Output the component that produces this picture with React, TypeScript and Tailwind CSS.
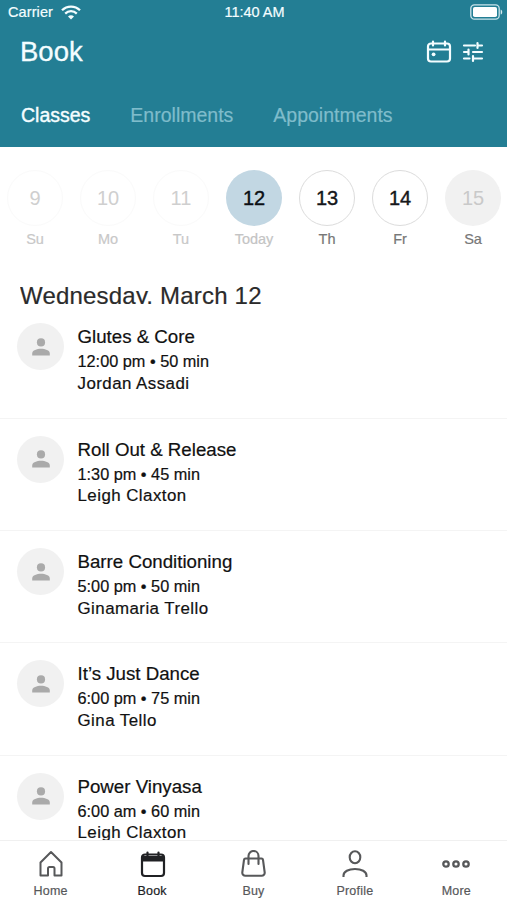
import React, { useState } from "react";

const tabs = ["Classes", "Enrollments", "Appointments"];

const days = [
  { num: 9, label: "Su", status: "past" },
  { num: 10, label: "Mo", status: "past" },
  { num: 11, label: "Tu", status: "past" },
  { num: 12, label: "Today", status: "selected" },
  { num: 13, label: "Th", status: "open" },
  { num: 14, label: "Fr", status: "open" },
  { num: 15, label: "Sa", status: "closed" },
];

const circleStyles: Record<string, string> = {
  past: "border border-[#fafafa] text-[#cfcfcf]",
  selected: "bg-[#c2d7e3] text-[#0b0f14] [-webkit-text-stroke:0.4px]",
  open: "border border-[#dcdcdc] text-[#15171a] [-webkit-text-stroke:0.4px]",
  closed: "bg-[#f1f1f1] text-[#c9c9c9]",
};

const labelStyles: Record<string, string> = {
  past: "text-[#c8c8c8]",
  selected: "text-[#c4c4c4]",
  open: "text-[#777777]",
  closed: "text-[#777777]",
};

const classes = [
  { name: "Glutes & Core", time: "12:00 pm", length: "50 min", teacher: "Jordan Assadi" },
  { name: "Roll Out & Release", time: "1:30 pm", length: "45 min", teacher: "Leigh Claxton" },
  { name: "Barre Conditioning", time: "5:00 pm", length: "50 min", teacher: "Ginamaria Trello" },
  { name: "It’s Just Dance", time: "6:00 pm", length: "75 min", teacher: "Gina Tello" },
  { name: "Power Vinyasa", time: "6:00 am", length: "60 min", teacher: "Leigh Claxton" },
];

const WifiIcon = () => (
  <svg width="20" height="15" viewBox="0 0 20 15" fill="none" stroke="currentColor" strokeWidth="2.3">
    <path d="M1 5.2C6 .3 14 .3 19 5.2" />
    <path d="M4.2 8.6c3.3-3.2 8.3-3.2 11.6 0" />
    <path d="M7 11.4c1.7-1.6 4.3-1.6 6 0L10 14.5z" fill="currentColor" stroke="none" />
  </svg>
);

const BatteryIcon = () => (
  <svg width="33" height="16" viewBox="0 0 33 16" fill="none">
    <rect x="0.8" y="0.8" width="28.4" height="14.4" rx="3.6" stroke="#c9e3ea" strokeWidth="1.3" />
    <rect x="3" y="3" width="24" height="10" rx="1.8" fill="#fff" />
    <path d="M30.7 5.4c2 .8 2 4.4 0 5.2z" fill="#d5eaef" />
  </svg>
);

const CalendarIcon = () => (
  <svg width="26" height="24" viewBox="0 0 26 24" fill="none" stroke="currentColor" strokeWidth="2.2" strokeLinecap="round">
    <rect x="2" y="3.5" width="22" height="18" rx="3" />
    <path d="M2 9.5h22M7 1.5v4M19 1.5v4" />
    <circle cx="7.6" cy="14.3" r="1.9" fill="currentColor" stroke="none" />
  </svg>
);

const FilterIcon = () => (
  <svg width="22" height="22" viewBox="0 0 22 22" fill="none" stroke="currentColor" strokeWidth="2.2" strokeLinecap="round">
    <path d="M2 4.5h11M15.5 2v5M15.5 4.5H20" />
    <path d="M2 11h4.5M6.5 8.5v5M11 11h9" />
    <path d="M2 17.500h5.500M11 15v5M11 17.500h9" />
  </svg>
);

const PersonIcon = () => (
  <svg width="18" height="18" viewBox="0 0 18 18" fill="#aaaaaa">
    <circle cx="9" cy="4.4" r="4.1" />
    <path d="M0.2 17.4v-2C.2 12.2 5 10.7 9 10.7s8.8 1.5 8.8 4.7v2z" />
  </svg>
);

const HomeIcon = () => (
  <svg width="26" height="28" viewBox="0 0 26 28" fill="none" stroke="currentColor" strokeWidth="2" strokeLinejoin="round">
    <path d="M2.5 12.5 13 2l10.5 10.5V25.5H16.5V18.5a1.5 1.5 0 0 0-1.5-1.5H11.5a1.5 1.5 0 0 0-1.5 1.5V25.5H2.5z" />
  </svg>
);

const BookIcon = () => (
  <svg width="28" height="28" viewBox="0 0 28 28" fill="none" stroke="currentColor" strokeWidth="2.2" strokeLinecap="round">
    <rect x="4" y="4.5" width="22" height="21.500" rx="3" />
    <path d="M4 6h22v5.500H4z" fill="currentColor" stroke="none" />
    <path d="M9.500 2.500v3M20.500 2.500v3" />
  </svg>
);

const BuyIcon = () => (
  <svg width="28" height="28" viewBox="0 0 28 28" fill="none" stroke="currentColor" strokeWidth="2.1" strokeLinecap="round" strokeLinejoin="round">
    <path d="M6.500 8.500h16a1.500 1.500 0 0 1 1.500 1.300l1.700 12.700a3 3 0 0 1-3 3.300H6.300a3 3 0 0 1-3-3.300l1.700-12.700a1.500 1.500 0 0 1 1.500-1.300z" />
    <path d="M9.500 14V6a5 5 0 0 1 10 0v8" />
  </svg>
);

const ProfileIcon = () => (
  <svg width="28" height="28" viewBox="0 0 28 28" fill="none" stroke="currentColor" strokeWidth="2.1">
    <ellipse cx="14" cy="7.3" rx="5.3" ry="6" />
    <path d="M2.5 27v-1.5c0-4 5-6.500 11.500-6.500s11.500 2.500 11.500 6.500V27" />
  </svg>
);

const MoreIcon = () => (
  <svg width="28" height="28" viewBox="0 0 28 28" fill="none" stroke="currentColor" strokeWidth="2.3">
    <circle cx="4" cy="14" r="2.7" />
    <circle cx="14" cy="14" r="2.7" />
    <circle cx="24" cy="14" r="2.7" />
  </svg>
);

const navItems = [
  { label: "Home", icon: <HomeIcon /> },
  { label: "Book", icon: <BookIcon /> },
  { label: "Buy", icon: <BuyIcon /> },
  { label: "Profile", icon: <ProfileIcon /> },
  { label: "More", icon: <MoreIcon /> },
];

const App: React.FC = () => {
  const [activeTab, setActiveTab] = useState("Classes");

  return (
    <div className="flex h-[900px] w-[507px] flex-col overflow-hidden bg-white font-['Liberation_Sans',Arial,sans-serif]">
      <header className="h-[147px] shrink-0 bg-[#237e94] text-[#f4fdff]">
        <div className="grid h-6 grid-cols-3 items-center pl-2 pr-1 text-[14.5px] [-webkit-text-stroke:0.2px]">
          <div className="flex items-center gap-2">
            <span className="pt-0.5 tracking-[0.1px]">Carrier</span>
            <WifiIcon />
          </div>
          <span className="-ml-0.5 pt-0.5 text-center">11:40 AM</span>
          <div className="flex justify-end">
            <BatteryIcon />
          </div>
        </div>
        <div className="flex h-14 items-center justify-between pl-5 pr-[23px]">
          <h1 className="text-[27.5px] [-webkit-text-stroke:0.3px]">Book</h1>
          <div className="flex items-center gap-2.5">
            <CalendarIcon />
            <FilterIcon />
          </div>
        </div>
        <nav className="flex gap-10 pl-[21px] pt-[21px]">
          {tabs.map((tab) => (
            <button
              key={tab}
              onClick={() => setActiveTab(tab)}
              className={
                tab === activeTab
                  ? "text-[19.5px] leading-7 [-webkit-text-stroke:0.4px]"
                  : "text-[19.5px] leading-7 text-[#7fbccb] [-webkit-text-stroke:0.2px]"
              }
            >
              {tab}
            </button>
          ))}
        </nav>
      </header>

      <div className="flex shrink-0 gap-[17px] pl-[7px] pt-[23px]">
        {days.map((day) => (
          <div key={day.num} className="flex w-14 shrink-0 flex-col items-center">
            <div
              className={`flex size-14 items-center justify-center rounded-full text-[20px] ${circleStyles[day.status]}`}
            >
              {day.num}
            </div>
            <span className={`mt-[3px] text-[14.5px] leading-5 [-webkit-text-stroke:0.2px] ${labelStyles[day.status]}`}>
              {day.label}
            </span>
          </div>
        ))}
      </div>

      <h2 className="ml-5 mt-[33px] h-[22px] shrink-0 overflow-hidden text-[24px] leading-[27px] tracking-[0.2px] text-[#2b2b2b] [-webkit-text-stroke:0.2px]">
        Wednesday, March 12
      </h2>

      <div className="min-h-0 flex-1 overflow-hidden pt-[2.3px]">
        {classes.map((item) => (
          <div
            key={item.name}
            className="flex h-[112.4px] gap-[13.5px] border-b border-[#f4f4f4] pl-[17px] pt-[17px]"
          >
            <div className="flex size-[47px] shrink-0 items-center justify-center rounded-full bg-[#f1f1f1]">
              <PersonIcon />
            </div>
            <div className="pt-px text-[#111111] [-webkit-text-stroke:0.2px]">
              <p className="text-[18.7px] leading-[26px]">{item.name}</p>
              <p className="text-[16.3px] leading-[22.5px]">
                {item.time} • {item.length}
              </p>
              <p className="text-[16.9px] leading-[22.5px] tracking-[0.45px]">{item.teacher}</p>
            </div>
          </div>
        ))}
      </div>

      <footer className="grid h-[60px] shrink-0 grid-cols-5 border-t border-[#f0f0f0] bg-white pt-[9px]">
        {navItems.map((item) => (
          <div
            key={item.label}
            className={`flex flex-col items-center ${item.label === "Book" ? "text-[#202124]" : "text-[#57585a]"}`}
          >
            {item.icon}
            <span className="mt-[5px] text-[12.5px] leading-4 tracking-[0.2px] [-webkit-text-stroke:0.2px]">
              {item.label}
            </span>
          </div>
        ))}
      </footer>
    </div>
  );
};

export default App;
